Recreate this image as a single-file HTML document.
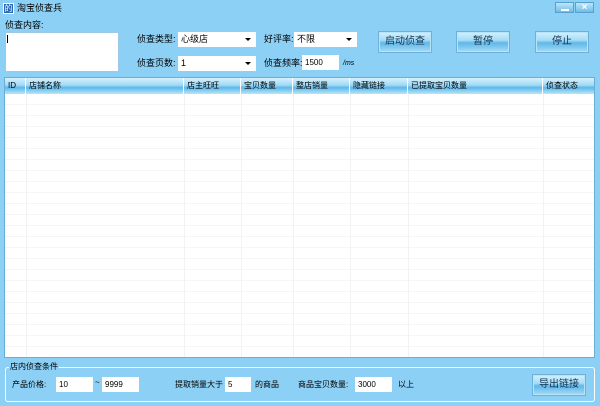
<!DOCTYPE html>
<html><head><meta charset="utf-8"><style>
*{box-sizing:border-box;margin:0;padding:0}
body{width:600px;height:406px;overflow:hidden;background:#8dd0f5;font-family:"Liberation Sans","Noto Sans CJK SC",sans-serif;font-size:9px;color:#000;position:relative}
.a{position:absolute;line-height:1;white-space:nowrap}
.in{position:absolute;background:#fff;font-size:8px;line-height:15px;padding-left:3px}
.dd{position:absolute;background:#fff;font-size:9px;line-height:15px;padding-left:3px}
.dd:after{content:"";position:absolute;right:5px;top:6px;border:3px solid transparent;border-top:3px solid #000}
.btn{position:absolute;border:1px solid #b8e4fa;background:linear-gradient(#cdeefd 0%,#a6dcf7 40%,#5fb7e8 55%,#9fd8f6 100%);outline:1px solid #6fb0d8;text-align:center;line-height:18px;font-size:10px;color:#103050}
.hd{position:absolute;top:0;height:16px;line-height:16px;font-size:8px;padding-left:3px;border-right:1px solid #fff}
</style></head><body>
<div class="a" style="left:3px;top:3px;width:11px;height:11px;background:#2a68b8;border:1px solid #fff;color:#fff;font-size:8px;line-height:9px;text-align:center">的</div>
<div class="a" style="left:17px;top:4px;font-size:9px">淘宝侦查兵</div>
<div class="a" style="left:555px;top:2px;width:19px;height:11px;background:linear-gradient(#bfe6fb,#6cbde9);border:1px solid #5aa0cc"><div class="a" style="left:5px;top:6px;width:8px;height:2px;background:#fff"></div></div>
<div class="a" style="left:575px;top:2px;width:19px;height:11px;background:linear-gradient(#bfe6fb,#6cbde9);border:1px solid #5aa0cc;color:#fff;font-size:10px;line-height:9px;text-align:center;font-weight:bold">×</div>

<div class="a" style="left:5px;top:21px">侦查内容:</div>
<div class="a" style="left:5px;top:32px;width:114px;height:40px;background:#fff;border:1px solid #9ec9e4"><div class="a" style="left:1px;top:2px;width:1px;height:8px;background:#000"></div></div>

<div class="a" style="left:137px;top:35px">侦查类型:</div>
<div class="dd" style="left:178px;top:32px;width:78px;height:15px">心级店</div>
<div class="a" style="left:264px;top:35px">好评率:</div>
<div class="dd" style="left:294px;top:32px;width:63px;height:15px">不限</div>
<div class="a" style="left:137px;top:59px">侦查页数:</div>
<div class="dd" style="left:178px;top:56px;width:78px;height:15px">1</div>
<div class="a" style="left:264px;top:59px">侦查频率:</div>
<div class="in" style="left:302px;top:55px;width:37px;height:15px">1500</div>
<div class="a" style="left:343px;top:60px;font-size:7px;font-style:italic">/ms</div>

<div class="btn" style="left:379px;top:32px;width:52px;height:20px">启动侦查</div>
<div class="btn" style="left:457px;top:32px;width:52px;height:20px">暂停</div>
<div class="btn" style="left:536px;top:32px;width:52px;height:20px">停止</div>

<div class="a" style="left:4px;top:77px;width:591px;height:281px;background:#fff;border:1px solid #6aaed6;overflow:hidden">
<div class="a" style="left:0;top:0;width:589px;height:16px;background:linear-gradient(#d8f1fd 0%,#9fd9f7 45%,#5cb8ea 60%,#b9e6fb 100%)"></div>
<div class="hd" style="left:0;width:21px">ID</div>
<div class="hd" style="left:21px;width:158px">店铺名称</div>
<div class="hd" style="left:179px;width:57px">店主旺旺</div>
<div class="hd" style="left:236px;width:52px">宝贝数量</div>
<div class="hd" style="left:288px;width:57px">整店销量</div>
<div class="hd" style="left:345px;width:58px">隐藏链接</div>
<div class="hd" style="left:403px;width:135px">已提取宝贝数量</div>
<div class="hd" style="left:538px;width:51px;border:none">侦查状态</div>
<div class="a" style="left:0;top:16px;width:589px;height:265px;background:repeating-linear-gradient(#fff 0 10px,#f3f5f7 10px 11px)"></div>
<div class="a" style="left:21px;top:16px;width:1px;height:265px;background:#f0f2f4"></div>
<div class="a" style="left:179px;top:16px;width:1px;height:265px;background:#f0f2f4"></div>
<div class="a" style="left:236px;top:16px;width:1px;height:265px;background:#f0f2f4"></div>
<div class="a" style="left:288px;top:16px;width:1px;height:265px;background:#f0f2f4"></div>
<div class="a" style="left:345px;top:16px;width:1px;height:265px;background:#f0f2f4"></div>
<div class="a" style="left:403px;top:16px;width:1px;height:265px;background:#f0f2f4"></div>
<div class="a" style="left:538px;top:16px;width:1px;height:265px;background:#f0f2f4"></div>
</div>

<div class="a" style="left:5px;top:367px;width:590px;height:35px;border:1px solid #fff;border-radius:3px"></div>
<div class="a" style="left:9px;top:363px;background:#8dd0f5;padding:0 1px;font-size:8px">店内侦查条件</div>
<div class="a" style="left:12px;top:381px;font-size:8px">产品价格:</div>
<div class="in" style="left:56px;top:377px;width:37px;height:15px">10</div>
<div class="a" style="left:95px;top:379px;font-size:8px">~</div>
<div class="in" style="left:102px;top:377px;width:37px;height:15px">9999</div>
<div class="a" style="left:175px;top:381px;font-size:8px">提取销量大于</div>
<div class="in" style="left:225px;top:377px;width:26px;height:15px">5</div>
<div class="a" style="left:255px;top:381px;font-size:8px">的商品</div>
<div class="a" style="left:298px;top:381px;font-size:8px">商品宝贝数量:</div>
<div class="in" style="left:355px;top:377px;width:37px;height:15px">3000</div>
<div class="a" style="left:398px;top:381px;font-size:8px">以上</div>
<div class="btn" style="left:533px;top:375px;width:52px;height:20px">导出链接</div>
</body></html>
